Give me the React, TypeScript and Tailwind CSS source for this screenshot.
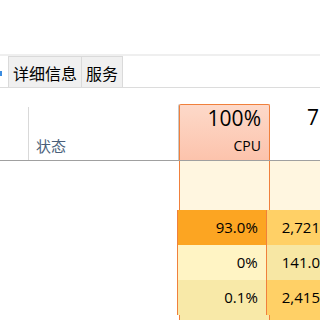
const cjk = { fontFamily: '"Noto Sans CJK SC", "Noto Sans", sans-serif' };
const num = { fontFamily: '"Open Sans", "Noto Sans", sans-serif' };

const rows = [
  { cpu: '93.0%', mem: '2,721', cpuBg: 'bg-[#fca522]', memBg: 'bg-[#ffd066]' },
  { cpu: '0%', mem: '141.0', cpuBg: 'bg-[#fff4c4]', memBg: 'bg-[#f7e7a4]' },
  { cpu: '0.1%', mem: '2,415', cpuBg: 'bg-[#f8e9a8]', memBg: 'bg-[#ffd066]' },
];

export default function App() {
  return (
    <div className="flex h-[320px] w-[320px] flex-col overflow-hidden bg-white text-black">
      {/* top area */}
      <div className="h-[56px] shrink-0 border-b-2 border-[#efefef]" />

      {/* tabs */}
      <div className="flex h-[32px] shrink-0 items-stretch border-b border-[#dcdcdc]" style={cjk}>
        <div className="relative w-[8px]">
          <div className="absolute left-0 top-[15px] h-[5px] w-[2px] bg-[#3c8ce0]" />
        </div>
        <div className="flex items-center border border-b-0 border-[#dadada] bg-[#f0f0f0] px-[4px] pt-[1px] text-[16px]">
          详细信息
        </div>
        <div className="flex items-center border border-b-0 border-l-0 border-[#dadada] bg-[#f0f0f0] px-[4px] pt-[1px] text-[16px]">
          服务
        </div>
      </div>

      {/* header */}
      <div className="flex h-[73px] shrink-0 border-b border-[#a0a0a0]">
        <div className="flex w-[179px] items-end pt-[19px]">
          <div className="h-full w-[29px] border-r border-[#d9d9d9]" />
          <div className="pb-[3px] pl-[7px] text-[15px] text-[#4a5f7a]" style={cjk}>
            状态
          </div>
        </div>
        <div className="mt-[16px] flex w-[91px] flex-col items-end rounded-t-[2px] border-x border-t border-[#f0803c] bg-gradient-to-b from-[#fdd9c9] to-[#fcc3ac] pr-[8px] shadow-[-1px_0_0_#c8c8c8]" style={num}>
          <div className="text-[21px] leading-[26px]">100%</div>
          <div className="mt-[6px] text-[14px] leading-[18px]">CPU</div>
        </div>
        <div className="flex flex-1 flex-col pl-[37px] pt-[16px]" style={num}>
          <div className="text-[21px] leading-[26px]">7</div>
        </div>
      </div>

      {/* rows */}
      <div className="flex h-[49px] shrink-0">
        <div className="w-[179px]" />
        <div className="w-[91px] border-x border-[#f0803c] bg-[#fff6e0]" />
        <div className="flex-1 bg-[#fff6e0]" />
      </div>
      {rows.map((r) => (
        <div key={r.cpu} className="flex h-[35px] shrink-0 text-[15px]" style={num}>
          <div className="w-[179px]" />
          <div className={`flex w-[91px] items-center justify-end border-x border-[#f0803c] pr-[8px] ${r.cpuBg}`}>
            {r.cpu}
          </div>
          <div className={`flex flex-1 items-center pl-[15px] ${r.memBg}`}>{r.mem}</div>
        </div>
      ))}
      <div className="flex flex-1">
        <div className="w-[179px]" />
        <div className="w-[91px] border-x border-[#f0803c] bg-[#f8e9a8]" />
        <div className="flex-1 bg-[#ffd066]" />
      </div>
    </div>
  );
}
